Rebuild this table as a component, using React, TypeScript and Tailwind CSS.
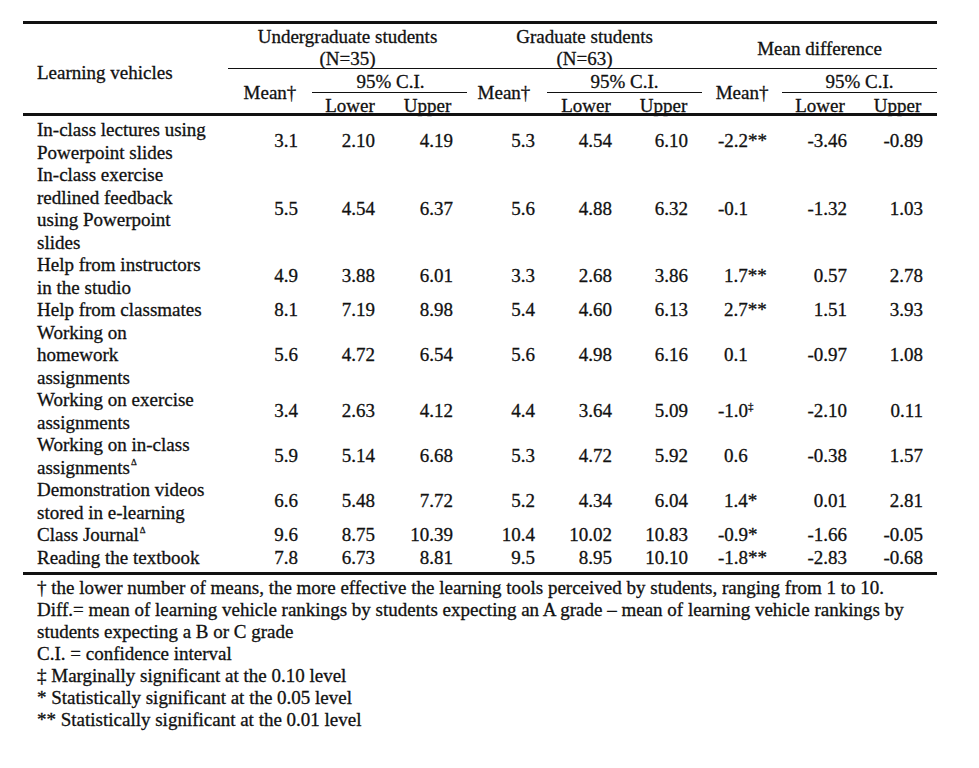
import React from "react";

type Row = {
  label: string[];
  mark?: boolean;
  vals: string[];
  diff: string;
  diffSup?: string;
  lo: string;
  hi: string;
};

const ROWS: Row[] = [
  { label: ["In-class lectures using", "Powerpoint slides"], vals: ["3.1", "2.10", "4.19", "5.3", "4.54", "6.10"], diff: "-2.2**", lo: "-3.46", hi: "-0.89" },
  { label: ["In-class exercise", "redlined feedback", "using Powerpoint", "slides"], vals: ["5.5", "4.54", "6.37", "5.6", "4.88", "6.32"], diff: "-0.1", lo: "-1.32", hi: "1.03" },
  { label: ["Help from instructors", "in the studio"], vals: ["4.9", "3.88", "6.01", "3.3", "2.68", "3.86"], diff: "1.7**", lo: "0.57", hi: "2.78" },
  { label: ["Help from classmates"], vals: ["8.1", "7.19", "8.98", "5.4", "4.60", "6.13"], diff: "2.7**", lo: "1.51", hi: "3.93" },
  { label: ["Working on", "homework", "assignments"], vals: ["5.6", "4.72", "6.54", "5.6", "4.98", "6.16"], diff: "0.1", lo: "-0.97", hi: "1.08" },
  { label: ["Working on exercise", "assignments"], vals: ["3.4", "2.63", "4.12", "4.4", "3.64", "5.09"], diff: "-1.0", diffSup: "‡", lo: "-2.10", hi: "0.11" },
  { label: ["Working on in-class", "assignments"], mark: true, vals: ["5.9", "5.14", "6.68", "5.3", "4.72", "5.92"], diff: "0.6", lo: "-0.38", hi: "1.57" },
  { label: ["Demonstration videos", "stored in e-learning"], vals: ["6.6", "5.48", "7.72", "5.2", "4.34", "6.04"], diff: "1.4*", lo: "0.01", hi: "2.81" },
  { label: ["Class Journal"], mark: true, vals: ["9.6", "8.75", "10.39", "10.4", "10.02", "10.83"], diff: "-0.9*", lo: "-1.66", hi: "-0.05" },
  { label: ["Reading the textbook"], vals: ["7.8", "6.73", "8.81", "9.5", "8.95", "10.10"], diff: "-1.8**", lo: "-2.83", hi: "-0.68" },
];

// right padding for the six numeric columns of the two student groups
const PAD = ["pr-[14px]", "pr-[13px]", "pr-[14px]", "pr-[12px]", "pr-[13px]", "pr-[14px]"];

function Tri() {
  return <sup className="text-[9px] top-[-0.9em] ml-[1px]">Δ</sup>;
}

export default function App() {
  return (
    <div className="min-h-screen w-full bg-white text-[#111] font-['Liberation_Serif',serif] text-[19px] [-webkit-text-stroke:0.3px_#111]">
      <div className="ml-[23px] pt-[21px] w-[914px]">
        <table className="table-fixed border-collapse w-[914px] border-t-[3px] border-b-[3px] border-[#111]">
          <colgroup>
            <col className="w-[205px]" />
            <col className="w-[84px]" />
            <col className="w-[76px]" />
            <col className="w-[79px]" />
            <col className="w-[80px]" />
            <col className="w-[78px]" />
            <col className="w-[77px]" />
            <col className="w-[80px]" />
            <col className="w-[76px]" />
            <col className="w-[79px]" />
          </colgroup>
          <thead className="leading-[22px]">
            <tr className="h-[44px]">
              <th rowSpan={3} className="font-normal text-left pl-[14px] align-middle border-b-[3px] border-[#111] pt-[8px]">
                Learning vehicles
              </th>
              <th colSpan={3} className="font-normal text-center align-bottom border-b border-[#111] p-0">
                <span className="block translate-y-[2px]">
                  Undergraduate students
                  <br />
                  (N=35)
                </span>
              </th>
              <th colSpan={3} className="font-normal text-center align-bottom border-b border-[#111] p-0">
                <span className="block translate-y-[2px]">
                  Graduate students
                  <br />
                  (N=63)
                </span>
              </th>
              <th colSpan={3} className="font-normal text-center align-middle border-b border-[#111] p-0 pt-[6px]">
                Mean difference
              </th>
            </tr>
            <tr className="h-[24px]">
              <th rowSpan={2} className="font-normal text-center align-middle border-b-[3px] border-[#111] pt-[4px]">Mean†</th>
              <th colSpan={2} className="font-normal text-center align-top border-b border-[#111] leading-[14px] pt-[6px] pb-[3px] pl-[2px]">95% C.I.</th>
              <th rowSpan={2} className="font-normal text-center align-middle border-b-[3px] border-[#111] pr-[6px] pt-[4px]">Mean†</th>
              <th colSpan={2} className="font-normal text-center align-top border-b border-[#111] leading-[14px] pt-[6px] pb-[3px]">95% C.I.</th>
              <th rowSpan={2} className="font-normal text-center align-middle border-b-[3px] border-[#111] pt-[4px]">Mean†</th>
              <th colSpan={2} className="font-normal text-center align-top border-b border-[#111] leading-[14px] pt-[6px] pb-[3px]">95% C.I.</th>
            </tr>
            <tr className="h-[22px] leading-[14px]">
              <th className="font-normal text-center border-b-[3px] border-[#111] pt-[5px]">Lower</th>
              <th className="font-normal text-center border-b-[3px] border-[#111] pt-[5px]">Upper</th>
              <th className="font-normal text-center border-b-[3px] border-[#111] pt-[5px]">Lower</th>
              <th className="font-normal text-center border-b-[3px] border-[#111] pt-[5px]">Upper</th>
              <th className="font-normal text-center border-b-[3px] border-[#111] pt-[5px]">Lower</th>
              <th className="font-normal text-center border-b-[3px] border-[#111] pt-[5px]">Upper</th>
            </tr>
          </thead>
          <tbody className="leading-[22.5px]">
            {ROWS.map((r, i) => {
              const edge = i === 0 ? "pt-[3px]" : i === ROWS.length - 1 ? "pb-[3px]" : "";
              return (
                <tr key={i}>
                  <td className={`pl-[14px] whitespace-nowrap align-top ${edge}`}>
                    {r.label.map((l, j) => (
                      <div key={j}>
                        {l}
                        {r.mark && j === r.label.length - 1 && <Tri />}
                      </div>
                    ))}
                  </td>
                  {r.vals.map((v, j) => (
                    <td key={j} className={`text-right align-middle ${PAD[j]} ${edge}`}>
                      {v}
                    </td>
                  ))}
                  <td className={`text-left align-middle whitespace-nowrap ${r.diff.startsWith("-") ? "pl-[16px]" : "pl-[22px]"} ${edge}`}>
                    {r.diff}
                    {r.diffSup && <sup className="text-[11px] top-[-0.7em]">{r.diffSup}</sup>}
                  </td>
                  <td className={`text-right align-middle pr-[11px] ${edge}`}>{r.lo}</td>
                  <td className={`text-right align-middle pr-[14px] ${edge}`}>{r.hi}</td>
                </tr>
              );
            })}
          </tbody>
        </table>

        <div className="pl-[14px] pt-[2px] leading-[22px] whitespace-nowrap">
          <p>† the lower number of means, the more effective the learning tools perceived by students, ranging from 1 to 10.</p>
          <p>
            Diff.= mean of learning vehicle rankings by students expecting an A grade – mean of learning vehicle rankings by
            <br />
            students expecting a B or C grade
          </p>
          <p>C.I. = confidence interval</p>
          <p>‡ Marginally significant at the 0.10 level</p>
          <p>* Statistically significant at the 0.05 level</p>
          <p>** Statistically significant at the 0.01 level</p>
        </div>
      </div>
    </div>
  );
}
